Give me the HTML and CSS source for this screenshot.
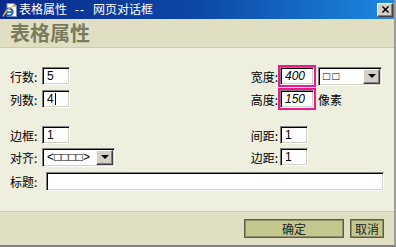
FILE: index.html
```html
<!DOCTYPE html>
<html lang="zh">
<head>
  <meta charset="UTF-8" />
  <title>表格属性</title>
  <link rel="stylesheet" href="styles.css">
</head>
<body>

<div class="dialog">
  <!-- TITLE BAR -->
  <div class="titlebar">
    <svg class="ie-icon" viewBox="0 0 16 16">
      <path d="M5 1.5h7l2.5 2.5v10.5H5z" fill="#fff" stroke="#7d8ca8" />
      <path d="M12 1.5v2.5h2.5" fill="none" stroke="#7d8ca8" />
      <circle cx="7" cy="10" r="3.6" fill="none" stroke="#1b5fd2" stroke-width="2" />
      <path d="M3.6 10h6.8" stroke="#1b5fd2" stroke-width="1.6" />
      <path d="M1 14.5c2-5 7-9.5 11-10.5" fill="none" stroke="#e8b818" stroke-width="1.2" />
    </svg>
    <span class="title">表格属性<span class="sep">--</span>网页对话框</span>
    <span class="close">
      <svg viewBox="0 0 10 8"><path d="M1.5 0.5l7 7M8.5 0.5l-7 7" stroke="#000" stroke-width="1.6" /></svg>
    </span>
  </div>

  <!-- HEADER -->
  <div class="header">表格属性</div>

  <!-- FORM -->
  <div class="form">
    <div class="row">
      <div class="left"><span class="lbl">行数:</span><span class="field">5</span></div>
      <div class="right">
        <span class="lbl">宽度:</span>
        <span class="mark"><span class="field num">400</span></span>
        <span class="select unit"><span class="opt">□□</span><span class="drop"><i></i></span></span>
      </div>
    </div>
    <div class="row r2">
      <div class="left"><span class="lbl">列数:</span><span class="field caret">4</span></div>
      <div class="right">
        <span class="lbl">高度:</span>
        <span class="mark"><span class="field num">150</span></span>
        <span class="unit-text">像素</span>
      </div>
    </div>
    <div class="row r3">
      <div class="left"><span class="lbl">边框:</span><span class="field">1</span></div>
      <div class="right"><span class="lbl">间距:</span><span class="field">1</span></div>
    </div>
    <div class="row">
      <div class="left">
        <span class="lbl">对齐:</span>
        <span class="select align"><span class="opt">&lt;□□□□&gt;</span><span class="drop"><i></i></span></span>
      </div>
      <div class="right"><span class="lbl">边距:</span><span class="field">1</span></div>
    </div>
    <div class="row r5">
      <span class="lbl wide">标题:</span><span class="field caption"></span>
    </div>
  </div>

  <!-- FOOTER -->
  <div class="footer">
    <button class="ok">确定</button>
    <button class="cancel">取消</button>
  </div>
</div>

</body>
</html>
```

FILE: styles.css
```css
html, body {
  margin: 0;
  padding: 0;
}

body {
  font-family: "Noto Sans CJK SC", sans-serif;
  font-size: 12px;
  color: #000;
}

.dialog {
  width: 394px;
  height: 245px;
  border-right: 2px solid #9c9c9c;
  border-bottom: 2px solid #808080;
  background: #efefe0;
  display: flex;
  flex-direction: column;
}

/* title bar */
.titlebar {
  height: 19px;
  flex: none;
  display: flex;
  align-items: center;
  padding-left: 2px;
  background: linear-gradient(90deg, #0a2a8e, #0c48a6 50%, #1c88de);
  color: #fff;
}

.ie-icon {
  width: 16px;
  height: 16px;
  margin-right: 1px;
}

.title {
  white-space: nowrap;
  line-height: 19px;
}

.title .sep {
  margin: 0 8px;
  font-family: "Liberation Sans", sans-serif;
  letter-spacing: 1px;
}

.close {
  margin-left: auto;
  margin-right: 1px;
  width: 16px;
  height: 14px;
  box-sizing: border-box;
  background: #d4d0c8;
  border: 1px solid;
  border-color: #fff #404040 #404040 #fff;
  box-shadow: inset -1px -1px 0 #808080;
  display: flex;
  align-items: center;
  justify-content: center;
}

.close svg {
  width: 9px;
  height: 7px;
}

/* header */
.header {
  height: 29px;
  flex: none;
  box-sizing: border-box;
  padding-left: 10px;
  background: #e0dfc3;
  border-bottom: 1px solid #d0cca0;
  font-size: 20px;
  font-weight: bold;
  line-height: 27px;
  color: #7a7a5c;
}

/* form */
.form {
  flex: 1;
  padding: 17px 10px 0;
}

.row {
  display: flex;
  align-items: center;
  height: 22px;
}

.row.r2 { margin-top: 1px; }
.row.r3 { margin-top: 14px; }
.row.r5 { margin-top: 2px; height: 23px; }

.left {
  width: 240px;
  display: flex;
  align-items: center;
}

.right {
  display: flex;
  align-items: center;
}

.lbl {
  width: 32px;
  white-space: nowrap;
}

.lbl.wide { width: 36px; }

.right .lbl {
  box-sizing: border-box;
  width: 30px;
  padding-right: 2px;
  text-align: right;
}

.field {
  box-sizing: border-box;
  width: 28px;
  height: 18px;
  padding-left: 4px;
  background: #fff;
  border: 1px solid;
  border-color: #808080 #fff #fff #808080;
  box-shadow: inset 1px 1px 0 #000, inset -1px -1px 0 #d4d0c8;
  font-family: "Liberation Sans", sans-serif;
  font-size: 12px;
  line-height: 16px;
}

.field.caret {
  position: relative;
}

.field.caret::after {
  content: "";
  position: absolute;
  left: 12px;
  top: 2px;
  width: 1px;
  height: 12px;
  background: #000;
}

.field.caption {
  flex: 1;
  height: 19px;
}

.mark {
  display: flex;
  margin-left: -2px;
  border: 2px solid #ec1a8c;
}

.field.num {
  width: 34px;
  font-style: italic;
}

.unit-text {
  margin-left: 2px;
}

/* select boxes */
.select {
  box-sizing: border-box;
  height: 19px;
  padding: 1px;
  display: flex;
  background: #fff;
  border: 1px solid;
  border-color: #808080 #fff #fff #808080;
  box-shadow: inset 1px 1px 0 #000, inset -1px -1px 0 #d4d0c8;
}

.select.unit {
  width: 64px;
  margin-left: 2px;
}

.select.align {
  width: 73px;
}

.opt {
  flex: 1;
  padding-left: 3px;
  font-family: "Liberation Sans", sans-serif;
  font-size: 12px;
  line-height: 15px;
  white-space: nowrap;
}

.unit .opt {
  letter-spacing: 2px;
}

.drop {
  flex: none;
  box-sizing: border-box;
  width: 17px;
  height: 15px;
  background: #d4d0c8;
  border: 1px solid;
  border-color: #fff #404040 #404040 #fff;
  box-shadow: inset -1px -1px 0 #808080;
  display: flex;
  align-items: center;
  justify-content: center;
}

.drop i {
  width: 0;
  height: 0;
  border-left: 4px solid transparent;
  border-right: 4px solid transparent;
  border-top: 4px solid #000;
}

/* footer */
.footer {
  height: 34px;
  flex: none;
  box-sizing: border-box;
  padding: 7px 10px 0 0;
  background: #e0dfc3;
  border-top: 1px solid #cfcc9e;
  display: flex;
  justify-content: flex-end;
  align-items: flex-start;
  gap: 6px;
}

button {
  box-sizing: border-box;
  height: 19px;
  padding: 0;
  background: #c4c78e;
  border: 1px solid #5e5e3e;
  box-shadow: inset 0 0 0 1px #8e8e68;
  font-family: "Noto Sans CJK SC", sans-serif;
  font-size: 12px;
  line-height: 15px;
  color: #222;
}

.ok { width: 100px; }
.cancel { width: 34px; }
```
